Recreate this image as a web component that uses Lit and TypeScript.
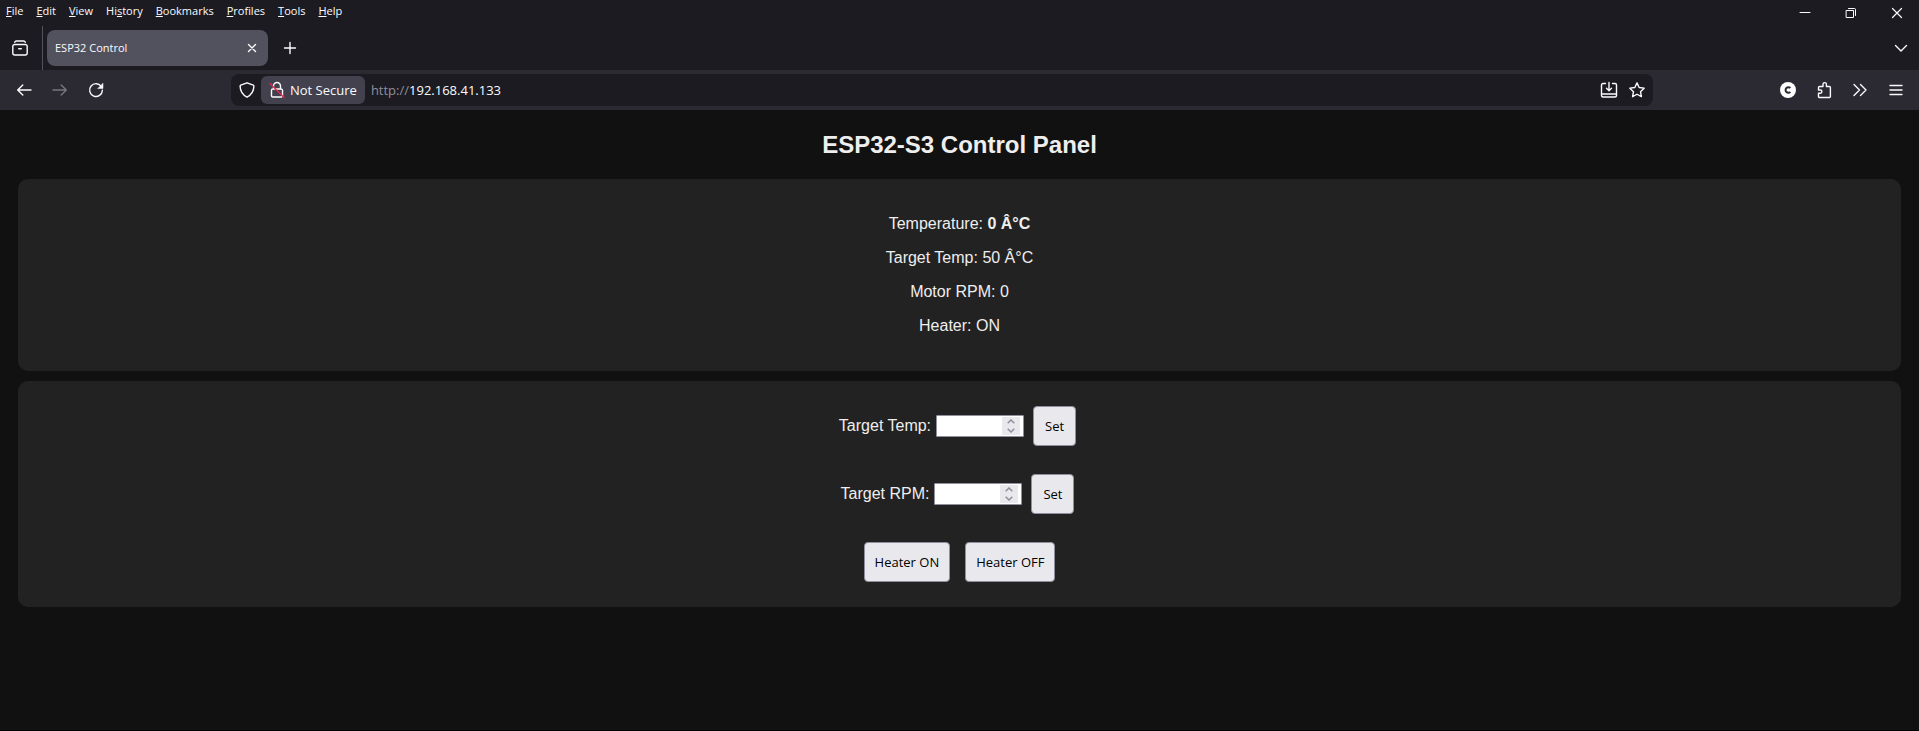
import { LitElement, html, css, svg } from "lit";
import { customElement, property, query, state } from "lit/decorators.js";

const icons = {
  archive: svg`<path d="M3.700 3.300C4 2.400 4.700 2 5.500 2h7c.8 0 1.500.4 1.800 1.300M1.800 8V7.500a2 2 0 0 1 2-2h10.400a2 2 0 0 1 2 2v6.500a2 2 0 0 1-2 2H3.800a2 2 0 0 1-2-2zM7.700 9.700h2.600" />`,
  tabClose: svg`<path d="M5.500 5.500l7 7M12.500 5.500l-7 7" />`,
  plus: svg`<path d="M9 3.500v11M3.500 9h11" />`,
  back: svg`<path d="M16 9H2.800M7.800 4L2.700 9l5.100 5" />`,
  forward: svg`<path d="M2 9h13.200M10.200 4l5.100 5-5.100 5" />`,
  reload: svg`<path d="M14.500 5.800A6.400 6.400 0 1 0 15.400 9.300" /><path d="M16 2.500v5h-5z" fill="currentColor" stroke-width="0.500" />`,
  shield: svg`<path d="M9 1.800L15.300 4.200c.4.200.6.500.6.900C15.800 10.500 13.300 14 9 16.200 4.700 14 2.200 10.500 2.100 5.100c0-.4.200-.7.600-.9z" />`,
  lock: svg`<path d="M5.500 8V5a3.500 3.500 0 0 1 7 0v3M4.800 8h8.400a1.300 1.300 0 0 1 1.300 1.300v5.400a1.300 1.300 0 0 1-1.300 1.300H4.800a1.300 1.300 0 0 1-1.300-1.300V9.300A1.300 1.300 0 0 1 4.800 8z" /><path d="M2 2.500L16 16.500" stroke="#e22850" />`,
  install: svg`<path d="M5.500 2.500H3A1.500 1.500 0 0 0 1.500 4v10.500A1.500 1.500 0 0 0 3 16h12a1.500 1.500 0 0 0 1.500-1.500V4A1.500 1.500 0 0 0 15 2.500h-2.500M1.500 13h15M9 1.500v8M6.500 7.200L9 9.700l2.500-2.500" />`,
  star: svg`<path d="M9 1.900l2.150 4.600 5 .65-3.650 3.500.9 5L9 13.250 4.600 15.650l.9-5L1.850 7.150l5-.65z" />`,
  account: svg`<circle cx="9" cy="9" r="8" fill="#ffffff" stroke="none" /><path d="M11.300 7.200A2.700 2.700 0 1 0 11.300 10.800" stroke="#2b2a33" stroke-width="2" stroke-linecap="butt" />`,
  extension: svg`<path d="M3.500 8.500V6.500a1 1 0 0 1 1-1H8V3.300a1.700 1.700 0 0 1 3.400 0v2.200h3a1 1 0 0 1 1 1v9a1 1 0 0 1-1 1H4.500a1 1 0 0 1-1-1v-3.300h1.800a1.600 1.600 0 0 0 0-3.200H3.500z" />`,
  overflow: svg`<path d="M3 3.500L8.500 9 3 14.500M9.500 3.500L15 9l-5.500 5.500" />`,
  menu: svg`<path d="M3 4.500h12M3 9h12M3 13.500h12" />`,
  chevron: svg`<path d="M3.500 6.500L9 12l5.500-5.500" />`,
  minimize: svg`<path d="M4 8.500h10" stroke-width="1" />`,
  restore: svg`<path d="M4.500 6.500h7v7h-7zM6.500 4.500h6a1 1 0 0 1 1 1v6" stroke-width="1" />`,
  close: svg`<path d="M4.500 4.500l9 9M13.500 4.500l-9 9" stroke-width="1.200" />`,
};

const icon = (name: keyof typeof icons) =>
  html`<svg class="icon" viewBox="0 0 18 18" aria-hidden="true">${icons[name]}</svg>`;

const iconStyles = css`
  .icon {
    width: 18px;
    height: 18px;
    display: block;
    flex: none;
    fill: none;
    stroke: currentColor;
    stroke-width: 1.4;
    stroke-linecap: round;
    stroke-linejoin: round;
  }
`;

@customElement("browser-chrome")
class BrowserChrome extends LitElement {
  static styles = [
    iconStyles,
    css`
      :host {
        display: block;
        background: #1c1b22;
        color: #fbfbfe;
        font-family: "Open Sans", "Noto Sans", sans-serif;
        font-size: 11px;
        line-height: 16px;
      }
      button {
        display: flex;
        align-items: center;
        justify-content: center;
        margin: 0;
        padding: 0;
        border: 0;
        background: none;
        color: inherit;
        font: inherit;
      }
      .title-row,
      .menus,
      .window-buttons,
      .tab-row,
      .nav-row {
        display: flex;
      }
      .title-row {
        justify-content: space-between;
        height: 26px;
      }
      .menus {
        align-items: flex-start;
        gap: 1px;
        padding-top: 3px;
      }
      .menu {
        padding: 0 6px;
      }
      .window-buttons {
        margin-right: -1px;
      }
      .window-button {
        width: 46px;
        height: 26px;
      }
      .tab-row {
        height: 44px;
        align-items: center;
      }
      .recent {
        width: 43px;
        height: 44px;
        padding-right: 2px;
        border-right: 1px solid #52525e;
      }
      .tab {
        display: flex;
        align-items: center;
        justify-content: space-between;
        width: 221px;
        height: 36px;
        margin: 0 4px;
        padding: 0 7px 0 8px;
        box-sizing: border-box;
        border-radius: 8px;
        background: #52525e;
      }
      .new-tab {
        width: 36px;
        height: 36px;
      }
      .all-tabs {
        width: 36px;
        height: 36px;
        margin-left: auto;
      }
      .nav-row {
        height: 40px;
        align-items: center;
        padding: 0 5px 0 6px;
        background: #2b2a33;
      }
      .tool {
        width: 36px;
        height: 36px;
      }
      .tool:disabled {
        color: #77767f;
      }
      .spring {
        width: 117px;
      }
      .address {
        display: flex;
        flex: 1;
        align-items: center;
        height: 32px;
        padding: 0 7px;
        border-radius: 8px;
        background: #1c1b22;
        font-size: 13px;
        line-height: 18px;
      }
      .security {
        gap: 4px;
        height: 28px;
        margin: 0 6px 0 5px;
        padding: 0 8px 0 7px;
        border-radius: 6px;
        background: #42414d;
      }
      .scheme {
        color: #8f8f9a;
      }
      .location {
        flex: 1;
        min-width: 0;
        padding: 0;
        border: 0;
        outline: 0;
        background: none;
        color: inherit;
        font: inherit;
      }
      .page-action {
        width: 28px;
        height: 28px;
      }
      .page-action:last-child {
        margin-right: -5px;
      }
    `,
  ];

  private menus = [
    ["", "F", "ile"],
    ["", "E", "dit"],
    ["", "V", "iew"],
    ["Hi", "s", "tory"],
    ["", "B", "ookmarks"],
    ["", "P", "rofiles"],
    ["", "T", "ools"],
    ["", "H", "elp"],
  ];

  render() {
    return html`
      <div class="title-row">
        <nav class="menus" aria-label="Menu bar">
          ${this.menus.map(
            ([before, key, after]) =>
              html`<button class="menu"><span>${before}<u>${key}</u>${after}</span></button>`
          )}
        </nav>
        <div class="window-buttons">
          <button class="window-button" aria-label="Minimize">${icon("minimize")}</button>
          <button class="window-button" aria-label="Restore">${icon("restore")}</button>
          <button class="window-button" aria-label="Close">${icon("close")}</button>
        </div>
      </div>
      <div class="tab-row">
        <button class="recent" aria-label="Recent browsing">${icon("archive")}</button>
        <div class="tab">
          <span>ESP32 Control</span>
          <button aria-label="Close tab">${icon("tabClose")}</button>
        </div>
        <button class="new-tab" aria-label="New tab">${icon("plus")}</button>
        <button class="all-tabs" aria-label="List all tabs">${icon("chevron")}</button>
      </div>
      <div class="nav-row">
        <button class="tool" aria-label="Back">${icon("back")}</button>
        <button class="tool" aria-label="Forward" disabled>${icon("forward")}</button>
        <button class="tool" aria-label="Reload">${icon("reload")}</button>
        <div class="spring"></div>
        <div class="address">
          <button aria-label="Tracking protection">${icon("shield")}</button>
          <button class="security">${icon("lock")}<span>Not Secure</span></button>
          <label class="scheme" for="location">http://</label>
          <input class="location" id="location" type="text" value="192.168.41.133" />
          <button class="page-action" aria-label="Install">${icon("install")}</button>
          <button class="page-action" aria-label="Bookmark this page">${icon("star")}</button>
        </div>
        <div class="spring"></div>
        <button class="tool" aria-label="Account">${icon("account")}</button>
        <button class="tool" aria-label="Extensions">${icon("extension")}</button>
        <button class="tool" aria-label="More tools">${icon("overflow")}</button>
        <button class="tool" aria-label="Application menu">${icon("menu")}</button>
      </div>
    `;
  }
}

@customElement("number-setting")
class NumberSetting extends LitElement {
  static styles = css`
    :host {
      display: flex;
      align-items: center;
      justify-content: center;
    }
    .label {
      margin-right: 5px;
    }
    .field {
      display: flex;
      box-sizing: border-box;
      width: 88px;
      height: 22px;
      margin-right: 9px;
      padding: 1px 3px 1px 1px;
      border: 1px solid #8f8f9d;
      border-radius: 1px;
      background: #ffffff;
    }
    .value {
      flex: 1;
      min-width: 0;
      padding: 0;
      border: 0;
      outline: 0;
      background: none;
      font: 13px "Open Sans", "Noto Sans", sans-serif;
      appearance: textfield;
    }
    .value::-webkit-inner-spin-button {
      appearance: none;
      margin: 0;
    }
    .spinner {
      display: flex;
      flex-direction: column;
      width: 18px;
      background: #e9e9ed;
    }
    .step {
      flex: 1;
      display: flex;
      align-items: center;
      justify-content: center;
      padding: 0;
      border: 0;
      background: none;
    }
    .arrow {
      width: 8px;
      height: 5px;
      fill: none;
      stroke: #8f8f9d;
      stroke-width: 1.5;
    }
    .set {
      height: 40px;
      margin-right: 4px;
      padding: 0 11px;
      border: 1px solid #8f8f9d;
      border-radius: 4px;
      background: #e9e9ed;
      color: #000000;
      font: 13px "Open Sans", "Noto Sans", sans-serif;
    }
  `;

  @property() label = "";
  @query(".value") private input!: HTMLInputElement;

  private apply() {
    if (this.input.value !== "") {
      this.dispatchEvent(new CustomEvent("set-value", { detail: Number(this.input.value) }));
    }
  }

  render() {
    return html`
      <label class="label" for="value">${this.label}</label>
      <div class="field">
        <input class="value" id="value" type="number" />
        <div class="spinner">
          <button class="step" aria-label="Increase" @click=${() => this.input.stepUp()}>
            <svg class="arrow" viewBox="0 0 8 5"><path d="M.7 4.300L4 1l3.300 3.300" /></svg>
          </button>
          <button class="step" aria-label="Decrease" @click=${() => this.input.stepDown()}>
            <svg class="arrow" viewBox="0 0 8 5"><path d="M.7.700L4 4 7.300.700" /></svg>
          </button>
        </div>
      </div>
      <button class="set" @click=${this.apply}>Set</button>
    `;
  }
}

@customElement("control-panel")
class ControlPanel extends LitElement {
  static styles = css`
    :host {
      display: block;
      padding: 21px 8px 8px;
      color: #eeeeee;
      font: 16px/18px "Liberation Sans", Arial, sans-serif;
      text-align: center;
    }
    .title {
      margin: 0 0 20px;
      font-size: 24px;
      line-height: 28px;
    }
    .card {
      margin: 10px;
      padding: 20px;
      border-radius: 10px;
      background: #222222;
    }
    .reading {
      margin: 16px 0;
    }
    .controls {
      display: flex;
      flex-direction: column;
      gap: 28px;
      padding: 25px 20px;
    }
    .switches {
      display: flex;
      justify-content: center;
      gap: 15px;
    }
    .switch {
      height: 40px;
      padding: 0 10px;
      border: 1px solid #8f8f9d;
      border-radius: 4px;
      background: #e9e9ed;
      color: #000000;
      font: 13px "Open Sans", "Noto Sans", sans-serif;
    }
  `;

  @state() private target = 50;
  @state() private rpm = 0;
  @state() private heater = true;

  render() {
    return html`
      <h2 class="title">ESP32-S3 Control Panel</h2>
      <section class="card">
        <p class="reading">Temperature: <b>0 Â°C</b></p>
        <p class="reading">Target Temp: ${this.target} Â°C</p>
        <p class="reading">Motor RPM: ${this.rpm}</p>
        <p class="reading">Heater: ${this.heater ? "ON" : "OFF"}</p>
      </section>
      <section class="card controls">
        <number-setting
          label="Target Temp:"
          @set-value=${(e: CustomEvent<number>) => (this.target = e.detail)}
        ></number-setting>
        <number-setting
          label="Target RPM:"
          @set-value=${(e: CustomEvent<number>) => (this.rpm = e.detail)}
        ></number-setting>
        <div class="switches">
          <button class="switch" @click=${() => (this.heater = true)}>Heater ON</button>
          <button class="switch" @click=${() => (this.heater = false)}>Heater OFF</button>
        </div>
      </section>
    `;
  }
}

@customElement("app-root")
class AppRoot extends LitElement {
  static styles = css`
    :host {
      display: block;
      box-sizing: border-box;
      min-height: 100vh;
      overflow: hidden;
      border-bottom: 1px solid #000000;
      background: #111111;
    }
  `;

  render() {
    return html`
      <browser-chrome></browser-chrome>
      <control-panel></control-panel>
    `;
  }
}
